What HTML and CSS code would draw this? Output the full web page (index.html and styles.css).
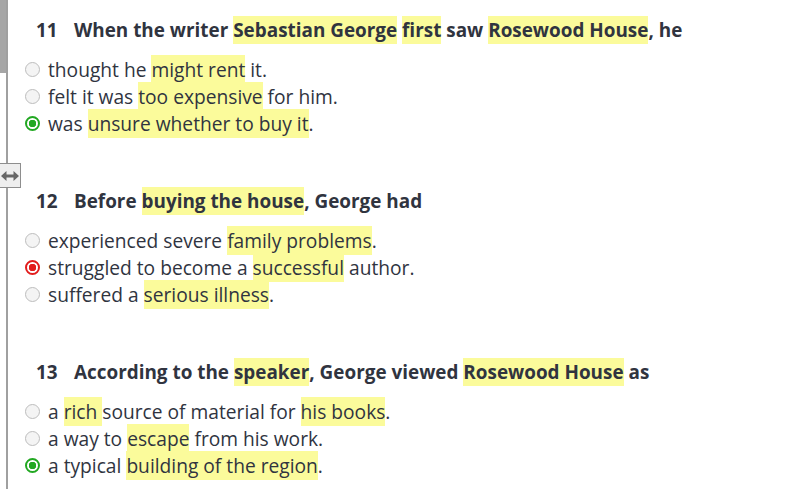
FILE: index.html
```html
<!DOCTYPE html>
<html>
<head>
<meta charset="utf-8">
<link rel="stylesheet" href="styles.css">
</head>
<body>
<div class="page">
  <div class="rail">
    <div class="rail-top"></div>
    <div class="rail-line"></div>
    <div class="handle">
      <svg width="18" height="12" viewBox="0 0 18 12"><path d="M0 6 L5.5 1 L5.5 4.5 L12.5 4.5 L12.5 1 L18 6 L12.5 11 L12.5 7.5 L5.5 7.5 L5.5 11 Z" fill="#666"/></svg>
    </div>
  </div>
  <div class="content">
    <section class="q q-first">
      <h2 class="q-title"><span class="num">11</span><span>When the writer <span class="hl">Sebastian George</span> <span class="hl">first</span> saw <span class="hl">Rosewood House</span>, he</span></h2>
      <ul class="opts">
        <li><span class="radio"></span><span>thought he <span class="hl">might rent</span> it.</span></li>
        <li><span class="radio"></span><span>felt it was <span class="hl">too expensive</span> for him.</span></li>
        <li><span class="radio ok"></span><span>was <span class="hl">unsure whether to buy it</span>.</span></li>
      </ul>
    </section>
    <section class="q">
      <h2 class="q-title"><span class="num">12</span><span>Before <span class="hl">buying the house</span>, George had</span></h2>
      <ul class="opts">
        <li><span class="radio"></span><span>experienced severe <span class="hl">family problems</span>.</span></li>
        <li><span class="radio bad"></span><span>struggled to become a <span class="hl">successful</span> author.</span></li>
        <li><span class="radio"></span><span>suffered a <span class="hl">serious illness</span>.</span></li>
      </ul>
    </section>
    <section class="q">
      <h2 class="q-title"><span class="num">13</span><span>According to the <span class="hl">speaker</span>, George viewed <span class="hl">Rosewood House</span> as</span></h2>
      <ul class="opts">
        <li><span class="radio"></span><span>a <span class="hl">rich </span>source of material for <span class="hl">his books</span>.</span></li>
        <li><span class="radio"></span><span>a way to <span class="hl">escape</span> from his work.</span></li>
        <li><span class="radio ok"></span><span>a typical <span class="hl">building of the region</span>.</span></li>
      </ul>
    </section>
  </div>
</div>
</body>
</html>
```
FILE: styles.css
```css
html, body {
  margin: 0;
  padding: 0;
  background: #fff;
}
.page {
  display: flex;
  min-height: 489px;
  font-family: "Open Sans", "Noto Sans", sans-serif;
  color: #30343f;
}
.rail {
  position: relative;
  width: 8px;
  flex: 0 0 8px;
}
.rail-top {
  width: 7px;
  height: 73px;
  background: #a6a6a6;
}
.rail-line {
  position: absolute;
  left: 6px;
  top: 0;
  bottom: 0;
  width: 2px;
  background: #a0a0a0;
}
.handle {
  position: absolute;
  left: -1px;
  top: 163px;
  width: 20px;
  height: 23px;
  border: 1px solid #8e8e8e;
  background: #eeeeee;
  display: flex;
  align-items: center;
  justify-content: center;
}
.content {
  padding-left: 18px;
  padding-top: 16px;
}
.q {
  margin-top: 50px;
}
.q-first {
  margin-top: 0;
}
.q-title {
  margin: 0 0 12px 10px;
  font-size: 18.9px;
  font-weight: 700;
  line-height: 28px;
  display: flex;
  white-space: nowrap;
}
.num {
  width: 38px;
}
.opts {
  list-style: none;
  margin: 0;
  padding: 0;
  font-size: 19.2px;
  line-height: 27px;
}
.opts li {
  display: flex;
  align-items: center;
  white-space: pre;
}
.hl {
  background: #fbfb9b;
  padding: 1px 0;
}
.radio {
  box-sizing: border-box;
  width: 15px;
  height: 15px;
  border-radius: 50%;
  border: 1px solid #bdbdbd;
  background: #f4f4f4;
  margin-left: -1px;
  margin-right: 8px;
  flex: 0 0 auto;
}
.radio.ok {
  border: 2.5px solid #22a822;
  background: radial-gradient(circle, #22a822 0 3.5px, #fff 4px);
}
.radio.bad {
  border: 2.5px solid #e21d1d;
  background: radial-gradient(circle, #e21d1d 0 3.5px, #fff 4px);
}
```
